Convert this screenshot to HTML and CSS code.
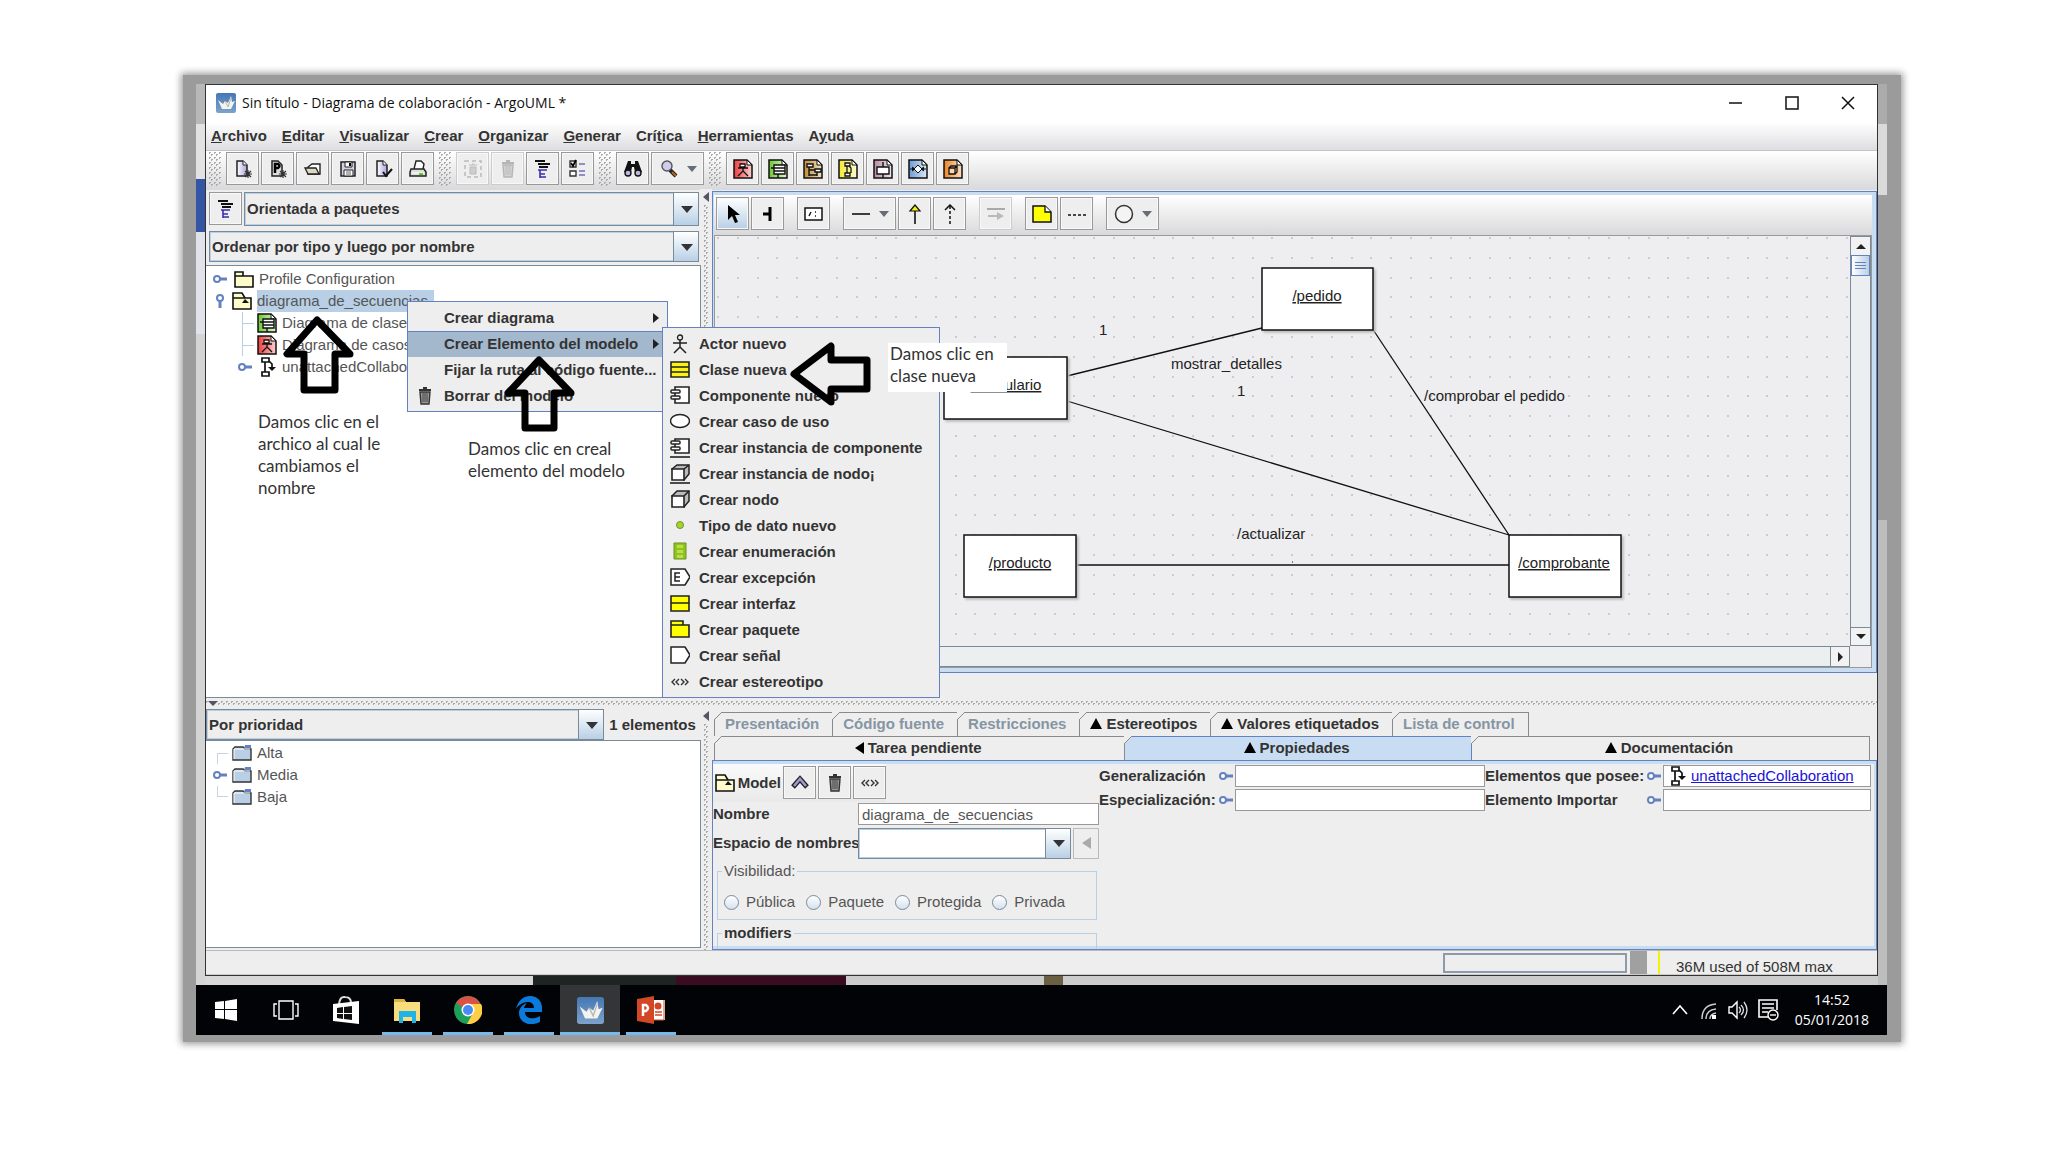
FILE: index.html
```html
<!DOCTYPE html>
<html lang="es">
<head>
  <meta charset="UTF-8">
  <meta name="viewport" content="width=device-width, initial-scale=1.0">
  <title>Sin título - Diagrama de colaboración - ArgoUML</title>
  <link rel="stylesheet" href="styles.css">
</head>
<body>
  <!-- Icon set -->
  <svg class="sprite" aria-hidden="true">
    <defs>
      <linearGradient id="lilac"><stop offset="0" stop-color="#fff"/><stop offset="1" stop-color="#a9a4dc"/></linearGradient>
      <linearGradient id="sky" x2="0" y2="1"><stop offset="0" stop-color="#4477b4"/><stop offset="1" stop-color="#7ea2cc"/></linearGradient>
      <linearGradient id="gred"><stop offset="0" stop-color="#f03c3c"/><stop offset="1" stop-color="#fbd0d0"/></linearGradient>
      <linearGradient id="ggreen"><stop offset="0" stop-color="#6cc832"/><stop offset="1" stop-color="#e2f6d2"/></linearGradient>
      <linearGradient id="gbrown"><stop offset="0" stop-color="#c08a34"/><stop offset="1" stop-color="#f2e2c0"/></linearGradient>
      <linearGradient id="gyellow"><stop offset="0" stop-color="#f4ea30"/><stop offset="1" stop-color="#fdfad0"/></linearGradient>
      <linearGradient id="gpink"><stop offset="0" stop-color="#b88aa4"/><stop offset="1" stop-color="#f4e8ee"/></linearGradient>
      <linearGradient id="gblue"><stop offset="0" stop-color="#6c9cd4"/><stop offset="1" stop-color="#d8e8f8"/></linearGradient>
      <linearGradient id="gorange"><stop offset="0" stop-color="#f28420"/><stop offset="1" stop-color="#fbe0c4"/></linearGradient>
      <pattern id="dots" width="99" height="99" patternUnits="userSpaceOnUse" x="2" y="1">
        <g fill="#cbcbce">
          <path id="dotrow" d="M0 0h2v2h-2zM20 0h2v2h-2zM40 0h2v2h-2zM59 0h2v2h-2zM79 0h2v2h-2z"/>
          <use href="#dotrow" y="20"/><use href="#dotrow" y="40"/><use href="#dotrow" y="59"/><use href="#dotrow" y="79"/>
        </g>
      </pattern>
    </defs>
    <symbol id="argo" viewBox="0 0 20 20"><rect width="20" height="20" rx="2" fill="url(#sky)"/><path d="M2 7l5 4 2-3 3 2 3-7 1 6 3-1-4 8H6z" fill="#f4f4ee"/><path d="M9 8l3 6 3-9" fill="none" stroke="#b9b9b0"/></symbol>
    <symbol id="new" viewBox="0 0 20 20"><path d="M4 2h6l4 4v11H4z" fill="url(#lilac)" stroke="#222" stroke-width="1.5"/><path d="M10 2v4h4" fill="#fff" stroke="#222"/><path d="M15 11v8M11 15h8M12 12l6 6M18 12l-6 6" stroke="#333" stroke-width="1.2"/></symbol>
    <symbol id="newp" viewBox="0 0 20 20"><path d="M4 2h6l4 4v11H4z" fill="#ddd" stroke="#222" stroke-width="1.5"/><path d="M7 14V5h3q3 2 0 4H7" fill="none" stroke="#000" stroke-width="2.5"/><path d="M15 11v8M11 15h8M12 12l6 6M18 12l-6 6" stroke="#333" stroke-width="1.2"/></symbol>
    <symbol id="open" viewBox="0 0 20 20"><path d="M5 15V8l4-3h8v10z" fill="#fff" stroke="#222" stroke-width="1.4"/><path d="M2 9h11l3 6H5z" fill="#ddd8c4" stroke="#222" stroke-width="1.3"/></symbol>
    <symbol id="save" viewBox="0 0 20 20"><path d="M3 3h14v14H3z" fill="#d0d0e4" stroke="#222" stroke-width="1.5"/><path d="M7 3h7v5H7zM6 11h9v6H6z" fill="#fff" stroke="#222"/><path d="M11 4h2v3h-2z" fill="#000"/><path d="M8 13h5M8 15h5" stroke="#666"/></symbol>
    <symbol id="savecheck" viewBox="0 0 20 20"><path d="M4 2h6l4 4v11H4z" fill="url(#lilac)" stroke="#222" stroke-width="1.5"/><path d="M10 2v4h4" fill="#fff" stroke="#222"/><path d="M10 13l3 4 6-7" fill="none" stroke="#111" stroke-width="2"/></symbol>
    <symbol id="print" viewBox="0 0 20 20"><path d="M6 10l2-8h5l3 3-1 5" fill="#fff" stroke="#222" stroke-width="1.4"/><path d="M3 10h13l2 3v4H2v-4z" fill="#ddd" stroke="#222" stroke-width="1.5"/><path d="M4 14h12" stroke="#fff"/><path d="M11 15h4" stroke="#6c2" stroke-width="2"/></symbol>
    <symbol id="trash" viewBox="0 0 20 20"><path d="M5 6h10l-1 12H6z" fill="#999" stroke="#333" stroke-width="1.4"/><path d="M4 4h12M8 2h4" stroke="#333" stroke-width="2"/><path d="M8 7v9M10 7v9M12 7v9" stroke="#444"/></symbol>
    <symbol id="trashdash" viewBox="0 0 20 20"><path d="M2 2h16v16H2z" fill="none" stroke="#444" stroke-width="1.5" stroke-dasharray="4 3"/><path d="M7 8h6v7H7zM6 6h8M9 5h2" fill="#888" stroke="#444"/></symbol>
    <symbol id="align" viewBox="0 0 20 20"><path d="M2 2h10M5 5h12M6 8h9" stroke="#111" stroke-width="1.8"/><path d="M5 11h9M7 15h5M7 18h6M7 11v8" stroke="#3a2fb0" stroke-width="1.6"/></symbol>
    <symbol id="checks" viewBox="0 0 20 20"><path d="M2 2h6v6H2zM2 12h6v5H2z" fill="#fff" stroke="#333" stroke-width="1.4"/><path d="M3 4l2 3 3-6" fill="none" stroke="#000" stroke-width="1.8"/><path d="M11 5h6M11 12h6M11 16h6" stroke="#726dba" stroke-width="1.6"/></symbol>
    <symbol id="find" viewBox="0 0 20 20"><path d="M5 2h3v3h4V2h3l4 11h-7l-1-5H9l-1 5H1z" fill="#111"/><circle cx="5" cy="14" r="3" fill="#bcb8e6" stroke="#111" stroke-width="1.4"/><circle cx="15" cy="14" r="3" fill="#bcb8e6" stroke="#111" stroke-width="1.4"/></symbol>
    <symbol id="lens" viewBox="0 0 20 20"><path d="M11 11l6 6" stroke="#222" stroke-width="4"/><path d="M13 13l4 4" stroke="#b5651d" stroke-width="2"/><circle cx="8" cy="7" r="5" fill="#cfccef" stroke="#555" stroke-width="1.4"/></symbol>
    <symbol id="dusecase" viewBox="0 0 20 20"><path d="M1 1h13l5 5v13H1z" fill="url(#gred)" stroke="#111" stroke-width="1.5"/><path d="M14 1v5h5z" fill="#fff" stroke="#111"/><path d="M7 5h5v3H7zM10 8v5M5 9h10M10 12l-5 5M10 12l5 5" fill="#fff" stroke="#111" stroke-width="1.3"/></symbol>
    <symbol id="dclass" viewBox="0 0 20 20"><path d="M1 1h13l5 5v13H1z" fill="url(#ggreen)" stroke="#111" stroke-width="1.5"/><path d="M14 1v5h5z" fill="#fff" stroke="#111"/><path d="M6 6h11v9H6zM6 9h11M6 12h11M3 9h3M10 15v4" fill="#fff" stroke="#111" stroke-width="1.4"/></symbol>
    <symbol id="dseq" viewBox="0 0 20 20"><path d="M1 1h13l5 5v13H1z" fill="url(#gbrown)" stroke="#111" stroke-width="1.5"/><path d="M14 1v5h5z" fill="#fff" stroke="#111"/><path d="M4 5h6v3H4zM12 10h6v3h-6zM6 8v9M14 13v4M6 11h6M6 16h8" fill="#fff" stroke="#111" stroke-width="1.4"/></symbol>
    <symbol id="dcol" viewBox="0 0 20 20"><path d="M1 1h13l5 5v13H1z" fill="url(#gyellow)" stroke="#111" stroke-width="1.5"/><path d="M14 1v5h5z" fill="#fff" stroke="#111"/><path d="M7 4h5v3H7zM7 14h5v3H7zM9 7v7M11 7l2 2v5" fill="#fff" stroke="#111" stroke-width="1.3"/></symbol>
    <symbol id="dstate" viewBox="0 0 20 20"><path d="M1 1h13l5 5v13H1z" fill="url(#gpink)" stroke="#111" stroke-width="1.5"/><path d="M14 1v5h5z" fill="#fff" stroke="#111"/><path d="M4 8h12v7H4zM10 3v5M10 15v4" fill="#fff" stroke="#111" stroke-width="1.4"/></symbol>
    <symbol id="dact" viewBox="0 0 20 20"><path d="M1 1h13l5 5v13H1z" fill="url(#gblue)" stroke="#111" stroke-width="1.5"/><path d="M14 1v5h5z" fill="#fff" stroke="#111"/><path d="M2 10h16M4 8l3 2-3 2M16 8l-3 2 3 2" fill="#111" stroke="#111"/><path d="M10 6l4 4-4 4-4-4z" fill="#fff" stroke="#111"/></symbol>
    <symbol id="ddep" viewBox="0 0 20 20"><path d="M1 1h13l5 5v13H1z" fill="url(#gorange)" stroke="#111" stroke-width="1.5"/><path d="M14 1v5h5z" fill="#fff" stroke="#111"/><path d="M6 9h6v6H6zM6 9l2-2h6v6l-2 2M12 9l2-2" fill="#f8d6b0" stroke="#111" stroke-width="1.3"/></symbol>
    <symbol id="cursor" viewBox="0 0 20 20"><path d="M5 1v15l4-4 3 7 3-1-3-7h5z" fill="#000"/></symbol>
    <symbol id="broom" viewBox="0 0 20 20"><path d="M5 10h6M12 3v14" stroke="#000" stroke-width="3" fill="none"/></symbol>
    <symbol id="role" viewBox="0 0 20 20"><path d="M1 4h17v12H1z" fill="#fff" stroke="#111" stroke-width="1.5"/><path d="M5 12l2-4M11 8h1M11 12h1" stroke="#111" stroke-width="1.4"/></symbol>
    <symbol id="line" viewBox="0 0 20 20"><path d="M1 10h18" stroke="#111" stroke-width="1.6"/></symbol>
    <symbol id="gen" viewBox="0 0 20 20"><path d="M10 20V7" stroke="#111" stroke-width="1.6"/><path d="M5 7l5-6 5 6z" fill="#f4f400" stroke="#111" stroke-width="1.2"/></symbol>
    <symbol id="dep" viewBox="0 0 20 20"><path d="M10 20V1" stroke="#111" stroke-width="1.5" stroke-dasharray="3 2"/><path d="M5 6l5-5 5 5" fill="none" stroke="#111" stroke-width="1.5"/></symbol>
    <symbol id="msg" viewBox="0 0 20 20"><path d="M1 5h18" stroke="#111" stroke-width="2"/><path d="M2 11h9V8l7 4-7 4v-3H2z" fill="#444"/></symbol>
    <symbol id="note" viewBox="0 0 20 20"><path d="M1 2h12l6 6v10H1z" fill="#ff0" stroke="#111" stroke-width="1.5"/><path d="M13 2v6h6" fill="#fff" stroke="#111" stroke-width="1.3"/></symbol>
    <symbol id="notelink" viewBox="0 0 20 20"><path d="M1 11h18" stroke="#111" stroke-width="1.6" stroke-dasharray="3 2"/></symbol>
    <symbol id="circle" viewBox="0 0 20 20"><circle cx="10" cy="10" r="8.5" fill="#f4f4f4" stroke="#333" stroke-width="1.5"/></symbol>
    <symbol id="pkg" viewBox="0 0 20 20"><path d="M1 7V3h8v4h10v11H1V7h8" fill="#fffccc" stroke="#111" stroke-width="1.6"/></symbol>
    <symbol id="model" viewBox="0 0 20 20"><path d="M1 7V2h9l3 5h6v11H1V7h12" fill="#fffccc" stroke="#111" stroke-width="1.6"/><path d="M10 12l3-4 4 4z" fill="#111"/></symbol>
    <symbol id="collab" viewBox="0 0 20 20"><path d="M5 1h7v4H5zM5 15h7v4H5zM8 5v10M12 4l3 3v4" fill="#fff" stroke="#111" stroke-width="1.7"/><path d="M11 10h8l-4 4z" fill="#111"/></symbol>
    <symbol id="knob" viewBox="0 0 14 10"><path d="M6 5h8" stroke="#6382bf" stroke-width="3"/><circle cx="4" cy="5" r="3" fill="#fff" stroke="#6382bf" stroke-width="2"/></symbol>
    <symbol id="folder" viewBox="0 0 20 20"><path d="M1 6l2-2h8l2 2h6v11H1z" fill="#b8cfe5" stroke="#333" stroke-width="1.4"/><path d="M12 5l1-3h6v3z" fill="#6382bf"/><path d="M2 16V6h16" fill="none" stroke="#fff"/></symbol>
    <symbol id="actor" viewBox="0 0 20 20"><circle cx="10" cy="3.5" r="2.5" fill="none" stroke="#222" stroke-width="1.3"/><path d="M10 6v7M3 9h14M10 13l-6 6M10 13l6 6" fill="none" stroke="#222" stroke-width="1.5"/></symbol>
    <symbol id="class" viewBox="0 0 20 20"><path d="M1 2h18v15H1zM1 7h18M1 12h18" fill="#fbf312" stroke="#222" stroke-width="1.6"/></symbol>
    <symbol id="comp" viewBox="0 0 20 20"><path d="M5 1h14v16H5z" fill="#fff" stroke="#222" stroke-width="1.6"/><rect x="1" y="4" width="9" height="3" rx="1" fill="#fff" stroke="#222" stroke-width="1.5"/><rect x="1" y="10" width="9" height="3" rx="1" fill="#fff" stroke="#222" stroke-width="1.5"/></symbol>
    <symbol id="compi" viewBox="0 0 20 20"><path d="M5 1h14v14H5z" fill="#fff" stroke="#222" stroke-width="1.6"/><rect x="1" y="3" width="9" height="3" rx="1" fill="#fff" stroke="#222" stroke-width="1.5"/><rect x="1" y="9" width="9" height="3" rx="1" fill="#fff" stroke="#222" stroke-width="1.5"/><path d="M0 19h20" stroke="#222" stroke-width="1.6"/></symbol>
    <symbol id="ucase" viewBox="0 0 20 20"><ellipse cx="10" cy="9" rx="9.5" ry="6.5" fill="#fff" stroke="#222" stroke-width="1.4"/></symbol>
    <symbol id="node" viewBox="0 0 20 20"><path d="M2 6l5-5h12v10l-5 6z" fill="#bbb" stroke="#222" stroke-width="1.5"/><path d="M2 6h12v11H2zM14 6l5-5" fill="#fff" stroke="#222" stroke-width="1.6"/></symbol>
    <symbol id="nodei" viewBox="0 0 20 20"><path d="M2 5l5-4h12v9l-5 6z" fill="#bbb" stroke="#222" stroke-width="1.5"/><path d="M2 5h12v11H2zM14 5l5-4" fill="#fff" stroke="#222" stroke-width="1.6"/><path d="M0 19h20" stroke="#222" stroke-width="1.6"/></symbol>
    <symbol id="dtype" viewBox="0 0 20 20"><circle cx="10" cy="9" r="3.5" fill="#a4d42c" stroke="#6f9226"/></symbol>
    <symbol id="enum" viewBox="0 0 20 20"><path d="M4 1h12v16H4z" fill="#8fc31f" stroke="#6f9226"/><path d="M7 3h6v3H7zM7 8h6v3H7zM7 13h6v3H7z" fill="#b8e04a"/></symbol>
    <symbol id="exc" viewBox="0 0 20 20"><path d="M1 1h14l5 8-5 8H1z" fill="#fff" stroke="#222" stroke-width="1.5"/><path d="M10 5H5v8h5M5 9h5" fill="none" stroke="#222" stroke-width="1.5"/></symbol>
    <symbol id="iface" viewBox="0 0 20 20"><path d="M1 2h18v15H1zM1 9h18" fill="#ff0" stroke="#222" stroke-width="1.6"/></symbol>
    <symbol id="ypkg" viewBox="0 0 20 20"><path d="M1 5V1h12v4h6v12H1V5h12" fill="#ff0" stroke="#222" stroke-width="1.6"/></symbol>
    <symbol id="signal" viewBox="0 0 20 20"><path d="M1 1h14l5 8-5 8H1z" fill="#fff" stroke="#222" stroke-width="1.5"/></symbol>
    <symbol id="stereo" viewBox="0 0 20 20"><path d="M5 7l-3 3 3 3M9 7l-3 3 3 3M11 7l3 3-3 3M15 7l3 3-3 3" fill="none" stroke="#333" stroke-width="1.4"/></symbol>
    <symbol id="up" viewBox="0 0 20 20"><path d="M3 14l7-8 7 8" fill="none" stroke="#222" stroke-width="5"/><path d="M4 13l6-7 6 7" fill="none" stroke="#a29ad4" stroke-width="2.5"/></symbol>
  </svg>

  <div class="frame">
    <div class="screen">
      <div class="desktop">
        <main class="window">
          <header class="titlebar">
            <svg class="ico"><use href="#argo"/></svg>
            <h1>Sin título - Diagrama de colaboración - ArgoUML *</h1>
            <div class="winbtns">
              <button type="button" aria-label="Minimizar"><svg width="14" height="14"><path d="M0 7h13" stroke="#111" stroke-width="1.5"/></svg></button>
              <button type="button" aria-label="Maximizar"><svg width="14" height="14"><path d="M1 1h12v12H1z" fill="none" stroke="#111" stroke-width="1.5"/></svg></button>
              <button type="button" aria-label="Cerrar"><svg width="14" height="14"><path d="M1 1l12 12M13 1L1 13" stroke="#111" stroke-width="1.5"/></svg></button>
            </div>
          </header>

          <nav class="menubar">
            <button type="button"><u>A</u>rchivo</button>
            <button type="button"><u>E</u>ditar</button>
            <button type="button"><u>V</u>isualizar</button>
            <button type="button"><u>C</u>rear</button>
            <button type="button"><u>O</u>rganizar</button>
            <button type="button"><u>G</u>enerar</button>
            <button type="button">Crí<u>t</u>ica</button>
            <button type="button"><u>H</u>erramientas</button>
            <button type="button">A<u>y</u>uda</button>
          </nav>

          <div class="toolbar">
            <div class="group">
              <span class="grip"></span>
              <button class="tool" aria-label="Nuevo"><svg class="ico"><use href="#new"/></svg></button>
              <button class="tool" aria-label="Nuevo proyecto"><svg class="ico"><use href="#newp"/></svg></button>
              <button class="tool" aria-label="Abrir"><svg class="ico"><use href="#open"/></svg></button>
              <button class="tool" aria-label="Guardar"><svg class="ico"><use href="#save"/></svg></button>
              <button class="tool" aria-label="Propiedades del proyecto"><svg class="ico"><use href="#savecheck"/></svg></button>
              <button class="tool" aria-label="Imprimir"><svg class="ico"><use href="#print"/></svg></button>
            </div>
            <div class="group">
              <span class="grip"></span>
              <button class="tool" disabled aria-label="Quitar"><svg class="ico"><use href="#trashdash"/></svg></button>
              <button class="tool" disabled aria-label="Borrar"><svg class="ico"><use href="#trash"/></svg></button>
              <button class="tool" aria-label="Perspectivas"><svg class="ico"><use href="#align"/></svg></button>
              <button class="tool" aria-label="Preferencias"><svg class="ico"><use href="#checks"/></svg></button>
            </div>
            <div class="group">
              <span class="grip"></span>
              <button class="tool" aria-label="Buscar"><svg class="ico"><use href="#find"/></svg></button>
              <button class="tool wide" aria-label="Zoom"><svg class="ico"><use href="#lens"/></svg><i class="caret"></i></button>
            </div>
            <div class="group">
              <span class="grip"></span>
              <button class="tool" aria-label="Casos de uso"><svg class="ico"><use href="#dusecase"/></svg></button>
              <button class="tool" aria-label="Clases"><svg class="ico"><use href="#dclass"/></svg></button>
              <button class="tool" aria-label="Secuencia"><svg class="ico"><use href="#dseq"/></svg></button>
              <button class="tool" aria-label="Colaboración"><svg class="ico"><use href="#dcol"/></svg></button>
              <button class="tool" aria-label="Estados"><svg class="ico"><use href="#dstate"/></svg></button>
              <button class="tool" aria-label="Actividad"><svg class="ico"><use href="#dact"/></svg></button>
              <button class="tool" aria-label="Despliegue"><svg class="ico"><use href="#ddep"/></svg></button>
            </div>
          </div>

          <div class="upper">
            <section class="explorer">
              <div class="combo-row first">
                <button class="tool" aria-label="Configurar perspectivas"><svg class="ico"><use href="#align"/></svg></button>
                <div class="combo tall"><select aria-label="Perspectiva"><option>Orientada a paquetes</option></select></div>
              </div>
              <div class="combo-row">
                <div class="combo"><select aria-label="Orden"><option>Ordenar por tipo y luego por nombre</option></select></div>
              </div>
              <ul class="tree">
                <li><svg class="knob"><use href="#knob"/></svg><svg class="ico root"><use href="#pkg"/></svg><span>Profile Configuration</span></li>
                <li><svg class="knob open"><use href="#knob"/></svg><svg class="ico"><use href="#model"/></svg><span class="picked">diagrama_de_secuencias</span></li>
                <li class="child"><i class="branch"></i><svg class="ico"><use href="#dclass"/></svg><span>Diagrama de clases</span></li>
                <li class="child"><i class="branch"></i><svg class="ico"><use href="#dusecase"/></svg><span>Diagrama de casos de uso</span></li>
                <li class="child"><svg class="knob"><use href="#knob"/></svg><svg class="ico"><use href="#collab"/></svg><span>unattachedCollaboration</span></li>
              </ul>
            </section>
            <div class="vsplit"></div>
            <section class="editor">
              <div class="toolbar inner">
                <div class="group">
                  <button class="tool on" aria-label="Seleccionar"><svg class="ico"><use href="#cursor"/></svg></button>
                  <button class="tool" aria-label="Escoba"><svg class="ico"><use href="#broom"/></svg></button>
                </div>
                <div class="group"><button class="tool" aria-label="Rol"><svg class="ico"><use href="#role"/></svg></button></div>
                <div class="group">
                  <button class="tool wide" aria-label="Asociación"><svg class="ico"><use href="#line"/></svg><i class="caret"></i></button>
                  <button class="tool" aria-label="Generalización"><svg class="ico"><use href="#gen"/></svg></button>
                  <button class="tool" aria-label="Dependencia"><svg class="ico"><use href="#dep"/></svg></button>
                </div>
                <div class="group"><button class="tool" disabled aria-label="Mensaje"><svg class="ico"><use href="#msg"/></svg></button></div>
                <div class="group">
                  <button class="tool" aria-label="Comentario"><svg class="ico"><use href="#note"/></svg></button>
                  <button class="tool" aria-label="Enlace"><svg class="ico"><use href="#notelink"/></svg></button>
                </div>
                <div class="group"><button class="tool wide" aria-label="Formas"><svg class="ico"><use href="#circle"/></svg><i class="caret"></i></button></div>
              </div>
              <div class="canvas-wrap">
                <svg class="canvas">
                  <rect width="100%" height="100%" fill="url(#dots)"/>
                  <g stroke="#111" stroke-width="1.3" fill="none">
                    <path d="M352 140L547 92M352 165L794 299M657 92L794 299M361 329H794"/>
                  </g>
                  <g class="shapes">
                    <rect x="547" y="32" width="111" height="62"/>
                    <rect x="229" y="121" width="123" height="62"/>
                    <rect x="249" y="299" width="112" height="62"/>
                    <rect x="794" y="299" width="112" height="62"/>
                  </g>
                  <path d="M577 326h1" stroke="#111"/>
                  <g class="names">
                    <text x="602" y="65">/pedido</text>
                    <text x="291" y="154">/formulario</text>
                    <text x="305" y="332">/producto</text>
                    <text x="849" y="332">/comprobante</text>
                  </g>
                  <g class="labels">
                    <text x="384" y="99">1</text>
                    <text x="456" y="133">mostrar_detalles</text>
                    <text x="522" y="160">1</text>
                    <text x="709" y="165">/comprobar el pedido</text>
                    <text x="522" y="303">/actualizar</text>
                  </g>
                </svg>
                <div class="vscroll"><i class="arr up"></i><i class="thumb"></i><i class="arr down"></i></div>
                <div class="hscroll"><i class="arr right"></i></div>
              </div>
            </section>
          </div>

          <div class="hsplit"></div>

          <div class="lower">
            <section class="todo">
              <div class="todo-head">
                <div class="combo"><select aria-label="Agrupar"><option>Por prioridad</option></select></div>
                <span>1 elementos</span>
              </div>
              <ul class="tree">
                <li><i class="stub"></i><svg class="ico"><use href="#folder"/></svg><span>Alta</span></li>
                <li><svg class="knob"><use href="#knob"/></svg><svg class="ico"><use href="#folder"/></svg><span>Media</span></li>
                <li><i class="stub last"></i><svg class="ico"><use href="#folder"/></svg><span>Baja</span></li>
              </ul>
            </section>
            <div class="vsplit"></div>
            <section class="details">
              <div class="tabs back">
                <button class="tab" disabled>Presentación</button>
                <button class="tab" disabled>Código fuente</button>
                <button class="tab" disabled>Restricciones</button>
                <button class="tab"><i class="tri"></i>Estereotipos</button>
                <button class="tab"><i class="tri"></i>Valores etiquetados</button>
                <button class="tab" disabled>Lista de control</button>
              </div>
              <div class="tabs front">
                <button class="tab"><i class="tri left"></i>Tarea pendiente</button>
                <button class="tab active"><i class="tri"></i>Propiedades</button>
                <button class="tab"><i class="tri"></i>Documentación</button>
              </div>
              <form class="props">
                <div class="main-props">
                  <div class="model-row">
                    <svg class="ico"><use href="#model"/></svg><b>Model</b>
                    <button type="button" class="tool" aria-label="Subir"><svg class="ico"><use href="#up"/></svg></button>
                    <button type="button" class="tool" aria-label="Borrar"><svg class="ico"><use href="#trash"/></svg></button>
                    <button type="button" class="tool" aria-label="Estereotipo"><svg class="ico"><use href="#stereo"/></svg></button>
                  </div>
                  <div class="pair">
                    <label for="nombre">Nombre</label>
                    <input id="nombre" type="text" value="diagrama_de_secuencias">
                  </div>
                  <div class="pair space">
                    <label for="espacio">Espacio de nombres</label>
                    <div class="combo white"><select id="espacio"><option></option></select></div>
                    <button type="button" class="goto" disabled aria-label="Ir"><i class="tri left"></i></button>
                  </div>
                  <fieldset>
                    <legend>Visibilidad:</legend>
                    <label><input type="radio" name="vis">Pública</label>
                    <label><input type="radio" name="vis">Paquete</label>
                    <label><input type="radio" name="vis">Protegida</label>
                    <label><input type="radio" name="vis">Privada</label>
                  </fieldset>
                  <fieldset class="cut"><legend><b>modifiers</b></legend></fieldset>
                </div>
                <div class="side">
                  <div class="pair"><label for="gen-f">Generalización</label><svg class="knob"><use href="#knob"/></svg><input id="gen-f" type="text"></div>
                  <div class="pair"><label for="esp-f">Especialización:</label><svg class="knob"><use href="#knob"/></svg><input id="esp-f" type="text"></div>
                </div>
                <div class="side owned">
                  <div class="pair"><b>Elementos que posee:</b><svg class="knob"><use href="#knob"/></svg><div class="box"><svg class="ico"><use href="#collab"/></svg><a href="#">unattachedCollaboration</a></div></div>
                  <div class="pair"><label for="imp-f">Elemento Importar</label><svg class="knob"><use href="#knob"/></svg><input id="imp-f" type="text"></div>
                </div>
              </form>
            </section>
          </div>

          <footer class="status">
            <div class="progress"></div>
            <div class="memory"><span>36M used of 508M max</span></div>
          </footer>
        </main>
      </div>

      <div class="taskbar">
        <button aria-label="Inicio"><svg width="22" height="22" viewBox="0 0 22 22"><path d="M0 3l9-1v8H0zM10 2l12-2v10H10zM0 11h9v9l-9-1zM10 11h12v11l-12-2z" fill="#fff"/></svg></button>
        <button aria-label="Vista de tareas"><svg width="26" height="20" viewBox="0 0 26 20"><path d="M6 1h14v18H6zM4 4H1v12h3M22 4h3v12h-3" fill="none" stroke="#fff" stroke-width="1.4"/></svg></button>
        <button aria-label="Tienda"><svg width="28" height="30" viewBox="0 0 28 30"><path d="M7 9Q8 1 13 2q6 0 6 6" fill="none" stroke="#ddd" stroke-width="2"/><path d="M1 9l26-3v23L1 26z" fill="#fff"/><path d="M5 13l6-1v6H5zM12 12l8-1v7h-8zM5 19h6v5l-6-1zM12 19h8v6l-8-1z" fill="#111"/></svg></button>
        <button class="run" aria-label="Explorador"><svg width="28" height="26" viewBox="0 0 28 26"><path d="M1 2h10l2 3h14v19H1z" fill="#f9dc7b"/><path d="M1 2h10l2 3H1z" fill="#e0b43c"/><path d="M6 26V14h17v12h-4v-6h-9v6z" fill="#1fb4e8"/></svg></button>
        <button class="run" aria-label="Chrome"><svg width="28" height="28" viewBox="0 0 28 28"><circle cx="14" cy="14" r="14" fill="#1da05b"/><path d="M14 14L2 7a14 14 0 0 1 24 0z" fill="#dd5144"/><path d="M14 8h13a14 14 0 0 1-14 20l6-11z" fill="#ffce44"/><circle cx="14" cy="14" r="6.5" fill="#fff"/><circle cx="14" cy="14" r="5" fill="#4a8af4"/></svg></button>
        <button class="run" aria-label="Edge"><svg width="26" height="28" viewBox="0 0 26 28"><path d="M0 13C2 4 8 0 14 0c8 0 12 6 12 12v4H9c0 7 9 8 15 4v6C14 31 3 27 3 17c0-5 4-9 8-10-2 2-3 4-3 5h10c0-8-12-8-18 1z" fill="#0a7bdc"/></svg></button>
        <button class="run current" aria-label="ArgoUML"><svg width="27" height="27"><use href="#argo"/></svg></button>
        <button class="run" aria-label="PowerPoint"><svg width="28" height="28" viewBox="0 0 28 28"><path d="M14 4h14v20H14z" fill="#fff"/><path d="M27 4v20H15" fill="none" stroke="#d24726"/><path d="M0 3l17-3v28L0 25z" fill="#d24726"/><path d="M6 20V9h3q4 3 0 6H6" fill="none" stroke="#fff" stroke-width="2.5"/><circle cx="21" cy="10" r="3.5" fill="#d24726"/><path d="M18 16h7M18 19h7" stroke="#d24726" stroke-width="1.5"/></svg></button>
        <div class="tray">
          <svg width="18" height="20"><path d="M2 14l7-8 7 8" fill="none" stroke="#fff" stroke-width="1.6"/></svg>
          <svg width="20" height="20"><path d="M4 19Q4 5 18 4M8 19q0-9 10-10M12 19q0-5 6-6" fill="none" stroke="#ccc" stroke-width="1.5"/><path d="M14 15h4v4h-4z" fill="#fff"/></svg>
          <svg width="22" height="20"><path d="M2 7h3l5-5v16l-5-5H2z" fill="none" stroke="#fff" stroke-width="1.4"/><path d="M12 7q3 3 0 6M14 5q5 5 0 10M17 2q6 8 0 16" fill="none" stroke="#ddd" stroke-width="1.3"/></svg>
          <svg width="22" height="22"><path d="M10 18H1V1h18v10M4 5h12M4 9h12M4 13h6" fill="none" stroke="#fff" stroke-width="1.6"/><circle cx="15" cy="16" r="5" fill="#000" stroke="#fff" stroke-width="1.4"/><path d="M12 16h6" stroke="#fff" stroke-width="1.4"/></svg>
          <div class="clock"><time>14:52</time><time>05/01/2018</time></div>
        </div>
      </div>

      <!-- Open menus -->
      <div class="menu ctx">
        <button><span>Crear diagrama</span><i class="sub"></i></button>
        <button class="hot"><span>Crear Elemento del modelo</span><i class="sub"></i></button>
        <button><span>Fijar la ruta al código fuente...</span></button>
        <button><svg class="ico"><use href="#trash"/></svg><span>Borrar del modelo</span></button>
      </div>
      <div class="menu elements">
        <button><svg class="ico"><use href="#actor"/></svg><span>Actor nuevo</span></button>
        <button><svg class="ico"><use href="#class"/></svg><span>Clase nueva</span></button>
        <button><svg class="ico"><use href="#comp"/></svg><span>Componente nuevo</span></button>
        <button><svg class="ico"><use href="#ucase"/></svg><span>Crear caso de uso</span></button>
        <button><svg class="ico"><use href="#compi"/></svg><span>Crear instancia de componente</span></button>
        <button><svg class="ico"><use href="#nodei"/></svg><span>Crear instancia de nodo¡</span></button>
        <button><svg class="ico"><use href="#node"/></svg><span>Crear nodo</span></button>
        <button><svg class="ico"><use href="#dtype"/></svg><span>Tipo de dato nuevo</span></button>
        <button><svg class="ico"><use href="#enum"/></svg><span>Crear enumeración</span></button>
        <button><svg class="ico"><use href="#exc"/></svg><span>Crear excepción</span></button>
        <button><svg class="ico"><use href="#iface"/></svg><span>Crear interfaz</span></button>
        <button><svg class="ico"><use href="#ypkg"/></svg><span>Crear paquete</span></button>
        <button><svg class="ico"><use href="#signal"/></svg><span>Crear señal</span></button>
        <button><svg class="ico"><use href="#stereo"/></svg><span>Crear estereotipo</span></button>
      </div>

      <!-- Tutorial notes -->
      <p class="hint one">Damos clic en el archico al cual le cambiamos el nombre</p>
      <p class="hint two">Damos clic en creal elemento del modelo</p>
      <p class="hint three">Damos clic en clase nueva</p>
      <svg class="arrows">
        <path d="M121 236L91 270H108V306H139V270H154zM343 276L312 309H329V344H358V309H375z"/>
        <path d="M598 290L635 262V276H671V305H635V318z"/>
      </svg>
    </div>
  </div>
</body>
</html>
```

FILE: styles.css
```css
* {
  box-sizing: border-box;
}

body {
  margin: 0;
  min-height: 100vh;
  padding: 75px 147px 110px 183px;
  display: flex;
  background: #fff;
  color: #333;
  font: 15px/18px "Liberation Sans", Arial, sans-serif;
}

button, input, select {
  font: inherit;
  color: inherit;
  margin: 0;
}

button {
  border: none;
  padding: 0;
  background: none;
}

h1, p, ul {
  margin: 0;
  padding: 0;
}

.sprite {
  position: absolute;
  width: 0;
  height: 0;
}

.ico {
  width: 20px;
  height: 20px;
  flex: none;
}

.frame {
  flex: 1;
  display: flex;
  padding: 9px 14px 7px 13px;
  background: #9b9b9b;
  box-shadow: 0 0 7px 2px #9b9b9b;
}

.screen {
  flex: 1;
  min-width: 0;
  position: relative;
  display: flex;
  flex-direction: column;
}

/* other windows peeking out around the main one */
.desktop {
  flex: 1;
  display: flex;
  padding: 0 9px 9px;
  background:
    linear-gradient(#b8b8b8 40px, #e2e2e2 40px 95px, #3454a4 95px 148px, #e2e2ea 148px 250px, #d4d4d4 250px) left / 9px 100% no-repeat,
    linear-gradient(#ababab 40px, #dadada 40px 111px, #9b9b9b 111px 436px, #bdbdbd 436px) right / 9px 100% no-repeat,
    linear-gradient(90deg, #d8d8d8 337px, #1d2422 337px 480px, #3a0c22 480px 650px, #ccc 650px 848px, #6b6142 848px 867px, #ccc 867px);
}

.window {
  flex: 1;
  min-width: 0;
  display: flex;
  flex-direction: column;
  background: #eee;
  border: 1px solid #333;
}

.titlebar {
  height: 39px;
  flex: none;
  display: flex;
  align-items: center;
  gap: 6px;
  padding: 0 22px 3px 10px;
  background: #fff;
}

.titlebar h1 {
  flex: 1;
  font: 14px/20px "Open Sans", "Noto Sans", sans-serif;
  color: #111;
}

.winbtns {
  display: flex;
  gap: 42px;
}

.winbtns button {
  width: 14px;
  height: 14px;
  display: flex;
}

.menubar {
  height: 27px;
  flex: none;
  display: flex;
  gap: 15px;
  padding: 0 5px 2px;
  background: linear-gradient(#fdfdfd, #dedde0);
  border-bottom: 1px solid #c4c4c6;
}

.menubar button {
  font-weight: bold;
}

.toolbar {
  height: 39px;
  flex: none;
  display: flex;
  gap: 5px;
  padding: 1px 3px;
  background: linear-gradient(#fff, #d9d9db);
}

.toolbar.inner {
  height: 40px;
  gap: 13px;
  padding: 2px;
}

.group {
  display: flex;
  gap: 2px;
}

.grip {
  width: 12px;
  height: 34px;
  margin-right: 3px;
}

.grip, .vsplit, .hsplit {
  background-image: radial-gradient(#aaa 1px, transparent 1px), radial-gradient(#aaa 1px, transparent 1px);
  background-size: 5px 5px;
  background-position: 0 0, 3px 3px;
}

.tool {
  width: 33px;
  height: 33px;
  flex: none;
  display: flex;
  align-items: center;
  justify-content: center;
  background: #eee;
  border: 1px solid #999;
  box-shadow: inset 0 0 0 1px #f8f8f8;
}

.tool.wide {
  width: 53px;
  gap: 8px;
}

.tool.on {
  background: linear-gradient(#fff, #b8cfe5);
}

.tool:disabled {
  border-color: #ccc;
}

.tool:disabled .ico {
  opacity: .3;
}

.caret {
  border: 5px solid transparent;
  border-top: 6px solid #666d75;
  border-bottom: 0;
}

/* Upper half */
.upper {
  flex: 1;
  min-height: 0;
  display: flex;
}

.explorer, .todo {
  width: 495px;
  flex: none;
  display: flex;
  flex-direction: column;
}

.combo-row {
  display: flex;
  gap: 2px;
  padding: 5px 2px 3px 3px;
}

.combo-row.first {
  padding: 2px 2px 0 3px;
}

.combo {
  flex: 1;
  height: 31px;
  position: relative;
  border: 1px solid #7a8a99;
  box-shadow: inset 0 0 0 1px #b8cfe5;
}

.combo.tall {
  height: 34px;
}

.combo select {
  width: 100%;
  height: 100%;
  padding: 0 28px 0 2px;
  appearance: none;
  border: none;
  background: none;
  font-weight: bold;
}

.combo::before {
  content: '';
  position: absolute;
  right: 0;
  top: 0;
  width: 24px;
  height: 100%;
  border-left: 1px solid #7a8a99;
  background: linear-gradient(#fff, #dce8f3 50%, #b8cfe5);
}

.combo::after {
  content: '';
  position: absolute;
  right: 5px;
  top: 50%;
  margin-top: -3px;
  border: 6px solid transparent;
  border-top: 7px solid #333;
  border-bottom: 0;
  pointer-events: none;
}

.combo.white {
  background: #fff;
}

.tree {
  flex: 1;
  list-style: none;
  padding: 2px 7px;
  background: #fff;
  border: 1px solid #7a8a99;
  border-left: none;
}

.tree li {
  height: 22px;
  display: flex;
  align-items: center;
  gap: 5px;
  color: #555;
  white-space: nowrap;
}

.tree .child {
  padding-left: 25px;
}

.tree .root {
  margin-left: 2px;
}

.knob {
  width: 14px;
  height: 10px;
  flex: none;
}

.knob.open {
  transform: rotate(90deg);
}

.tree .branch {
  width: 14px;
  height: 22px;
  margin-left: 4px;
  margin-right: -4px;
  border-left: 1px solid #b8cfe5;
  background: linear-gradient(#b8cfe5, #b8cfe5) 0 11px / 11px 1px no-repeat;
}

.stub {
  width: 11px;
  height: 11px;
  margin: 11px -1px 0 4px;
  border: 1px solid #c5d3e2;
  border-width: 1px 0 0 1px;
}

.stub.last {
  margin: 0 -1px 11px 4px;
  border-width: 0 0 1px 1px;
}

.picked {
  background: #b8cfe5;
  line-height: 22px;
  padding-right: 6px;
}

.vsplit {
  width: 11px;
  flex: none;
  position: relative;
  border: solid #eee;
  border-width: 0 3px;
}

.vsplit::before {
  content: '';
  position: absolute;
  left: -1px;
  top: 2px;
  border: 5px solid transparent;
  border-right: 6px solid #556;
  border-left: 0;
  outline: 3px solid #eee;
  background: #eee;
}

.hsplit {
  height: 11px;
  flex: none;
  position: relative;
  border: solid #eee;
  border-width: 3px 0;
}

.hsplit::before {
  content: '';
  position: absolute;
  left: 2px;
  top: 0;
  border: 5px solid transparent;
  border-top: 5px solid #556;
  border-bottom: 0;
  background: #eee;
}

.editor {
  flex: 1;
  min-width: 0;
  margin: 1px 0 25px;
  display: flex;
  flex-direction: column;
  padding: 3px 4px 4px 1px;
  background: #c8ddf2;
  border: 1px solid #6382bf;
}

.canvas-wrap {
  flex: 1;
  min-height: 0;
  display: grid;
  grid-template: 1fr 21px / 1fr 21px;
  background: #eeeef0;
  border: 1px solid #999;
}

.canvas {
  width: 100%;
  height: 100%;
  min-height: 0;
}

.shapes {
  fill: #fff;
  stroke: #111;
  stroke-width: 1.5;
  filter: drop-shadow(2px 2px 1px #bbb);
}

.names {
  text-anchor: middle;
  text-decoration: underline;
  fill: #222;
}

.labels {
  fill: #222;
}

.vscroll {
  display: flex;
  flex-direction: column;
  border: 1px solid #7a8a99;
  background: #eceff2;
}

.arr {
  height: 18px;
  flex: none;
  display: flex;
  align-items: center;
  justify-content: center;
  background: #f2f2f2;
}

.arr::before {
  content: '';
  border: 5px solid transparent;
}

.arr.up::before {
  border-bottom-color: #222;
  border-top: 0;
}

.arr.down {
  margin-top: auto;
  border-top: 1px solid #7a8a99;
}

.arr.down::before {
  border-top-color: #222;
  border-bottom: 0;
}

.arr.right {
  width: 19px;
  height: 100%;
  margin-left: auto;
  border-left: 1px solid #7a8a99;
}

.arr.right::before {
  border-left-color: #222;
  border-right: 0;
}

.thumb {
  height: 21px;
  border: 1px solid #6382bf;
  background:
    linear-gradient(#6382bf 1px, transparent 1px 3px, #6382bf 3px 4px, transparent 4px 6px, #6382bf 6px) center / 11px 7px no-repeat,
    linear-gradient(90deg, #fff, #b8cfe5);
}

.hscroll {
  display: flex;
  border: 1px solid #7a8a99;
  background: #eceff0;
}

/* Lower half */
.lower {
  height: 241px;
  flex: none;
  display: flex;
}

.todo {
  padding-bottom: 2px;
}

.todo .tree {
  padding-top: 1px;
}

.todo-head {
  display: flex;
  align-items: center;
  font-weight: bold;
}

.todo-head .combo {
  flex: none;
  width: 398px;
}

.todo-head span {
  flex: 1;
  text-align: center;
}

.details {
  flex: 1;
  min-width: 0;
  display: flex;
  flex-direction: column;
  padding-top: 3px;
}

.tabs {
  display: flex;
  height: 24px;
  flex: none;
  padding: 0 7px 0 2px;
}

.tab {
  position: relative;
  display: flex;
  align-items: center;
  justify-content: center;
  gap: 4px;
  padding: 0 13px 2px 10px;
  font-weight: bold;
  border: 1px solid #8a8a8a;
  border-width: 1px 1px 0 0;
  white-space: nowrap;
}

.tab:first-child {
  border-left-width: 1px;
}

.tab::before {
  content: '';
  position: absolute;
  left: -1px;
  top: -1px;
  width: 8px;
  height: 8px;
  background: linear-gradient(135deg, #eee 5px, #8a8a8a 5px 6px, transparent 6px);
}

.back .tab:disabled {
  color: #8695a3;
}

.front .tab {
  flex: 413;
}

.front .tab.active {
  flex: 345;
  background: #c8ddf2;
  border-color: #6382bf;
}

.front .tab:last-child {
  flex: 400;
}

.tri {
  border: 6px solid transparent;
  border-top: 0;
  border-bottom: 11px solid #000;
}

.tri.left {
  border: 6px solid transparent;
  border-left: 0;
  border-right: 9px solid #000;
}

.props {
  flex: 1;
  min-height: 0;
  display: grid;
  grid-template-columns: repeat(3, 1fr);
  padding: 0 5px 0 0;
  border: 1px solid #6382bf;
  box-shadow: inset 0 3px #c8ddf2, inset 0 -3px #c8ddf2, inset -2px 0 #c8ddf2;
  overflow: hidden;
}

.model-row {
  width: 173px;
  height: 38px;
  margin-top: 3px;
  display: flex;
  align-items: center;
  gap: 2px;
  padding: 0 0 1px 2px;
  background: linear-gradient(#fafafa, #e9e9e9);
}

.model-row b {
  width: 45px;
  text-align: right;
}

.pair {
  display: flex;
  align-items: center;
  gap: 2px;
  height: 24px;
  font-weight: bold;
}

.pair > label, .pair > b {
  width: 143px;
  flex: none;
  white-space: nowrap;
}

.pair input, .box {
  flex: 1;
  min-width: 0;
  height: 22px;
  padding: 0 3px;
  background: #fff;
  border: 1px solid #999;
  color: #555;
  font-weight: normal;
}

.pair.space {
  height: 34px;
}

.goto {
  width: 26px;
  height: 31px;
  border: 1px solid #bbb;
  display: flex;
  align-items: center;
  justify-content: center;
}

.goto .tri.left {
  border-right-color: #aaa;
}

fieldset {
  height: 58px;
  margin: 2px 2px 4px 4px;
  padding: 13px 6px 0;
  border: 1px solid #b8cfe5;
  display: flex;
  gap: 11px;
  color: #555;
}

fieldset.cut {
  height: 40px;
}

legend {
  padding: 0 2px;
  margin-left: -2px;
}

legend b {
  color: #333;
}

fieldset label {
  display: flex;
  align-items: center;
  gap: 7px;
  height: 18px;
}

fieldset input {
  appearance: none;
  width: 15px;
  height: 15px;
  border: 1px solid #7a8a99;
  border-radius: 50%;
  background: linear-gradient(#fff, #d5e1ee);
}

.side {
  padding-top: 3px;
}

.side .pair > label {
  width: 118px;
}

.owned .pair > label, .owned .pair > b {
  width: 160px;
}

.box {
  display: flex;
  align-items: center;
  gap: 4px;
}

.box a {
  color: #1a12d8;
}

.status {
  height: 25px;
  flex: none;
  display: flex;
  justify-content: flex-end;
  gap: 3px;
  border-top: 1px solid #bbb;
  border-bottom: 1px solid #ccc;
}

.progress {
  width: 184px;
  height: 20px;
  margin-top: 2px;
  border: 2px solid #8c9bab;
}

.memory {
  width: 247px;
  padding: 7px 0 0 46px;
  background: linear-gradient(90deg, #a0a0a0 17px, #eee 17px 28px, #f4f400 28px 30px, #eee 30px);
}

/* Taskbar */
.taskbar {
  height: 50px;
  flex: none;
  display: flex;
  background: #020307;
  color: #fff;
}

.taskbar button {
  width: 60px;
  display: flex;
  align-items: center;
  justify-content: center;
  background: linear-gradient(transparent, transparent) center bottom / 50px 3px no-repeat;
}

.taskbar .run {
  margin-left: 1px;
  background-image: linear-gradient(#76b9ed, #76b9ed);
}

.taskbar .current {
  background-color: #333537;
  background-size: 60px 3px;
}

.tray {
  margin-left: auto;
  display: flex;
  align-items: center;
  gap: 9px;
  padding-right: 18px;
}

.clock {
  display: flex;
  flex-direction: column;
  align-items: center;
  margin-left: 6px;
  font: 14px/20px "Open Sans", "Noto Sans", sans-serif;
}

/* Popup menus */
.menu {
  position: absolute;
  display: flex;
  flex-direction: column;
  padding: 3px 0 2px;
  background: #eee;
  border: 1px solid #6382bf;
}

.menu button {
  height: 26px;
  position: relative;
  display: flex;
  align-items: center;
  gap: 9px;
  font-weight: bold;
  white-space: nowrap;
}

.ctx {
  left: 211px;
  top: 217px;
  width: 261px;
}

.ctx button {
  padding-left: 36px;
}

.ctx .ico {
  position: absolute;
  left: 7px;
}

.ctx .hot {
  background: #a3b8cc;
  box-shadow: inset 0 1px #6382bf;
}

.sub {
  position: absolute;
  right: 8px;
  border: 5px solid transparent;
  border-left: 6px solid #222;
  border-right: 0;
}

.elements {
  left: 466px;
  top: 243px;
  width: 278px;
}

.elements button {
  padding-left: 7px;
}

.hint {
  position: absolute;
  font: 17px/22px Lato, "Open Sans", sans-serif;
  color: #333;
}

.hint.one {
  left: 62px;
  top: 327px;
  width: 130px;
}

.hint.two {
  left: 272px;
  top: 354px;
  width: 180px;
}

.hint.three {
  left: 692px;
  top: 259px;
  width: 119px;
  height: 49px;
  padding-left: 2px;
  background: #fff;
}

.arrows {
  position: absolute;
  left: 0;
  top: 0;
  width: 700px;
  height: 400px;
  pointer-events: none;
  fill: none;
  stroke: #000;
  stroke-width: 7;
  stroke-linejoin: round;
}
```
